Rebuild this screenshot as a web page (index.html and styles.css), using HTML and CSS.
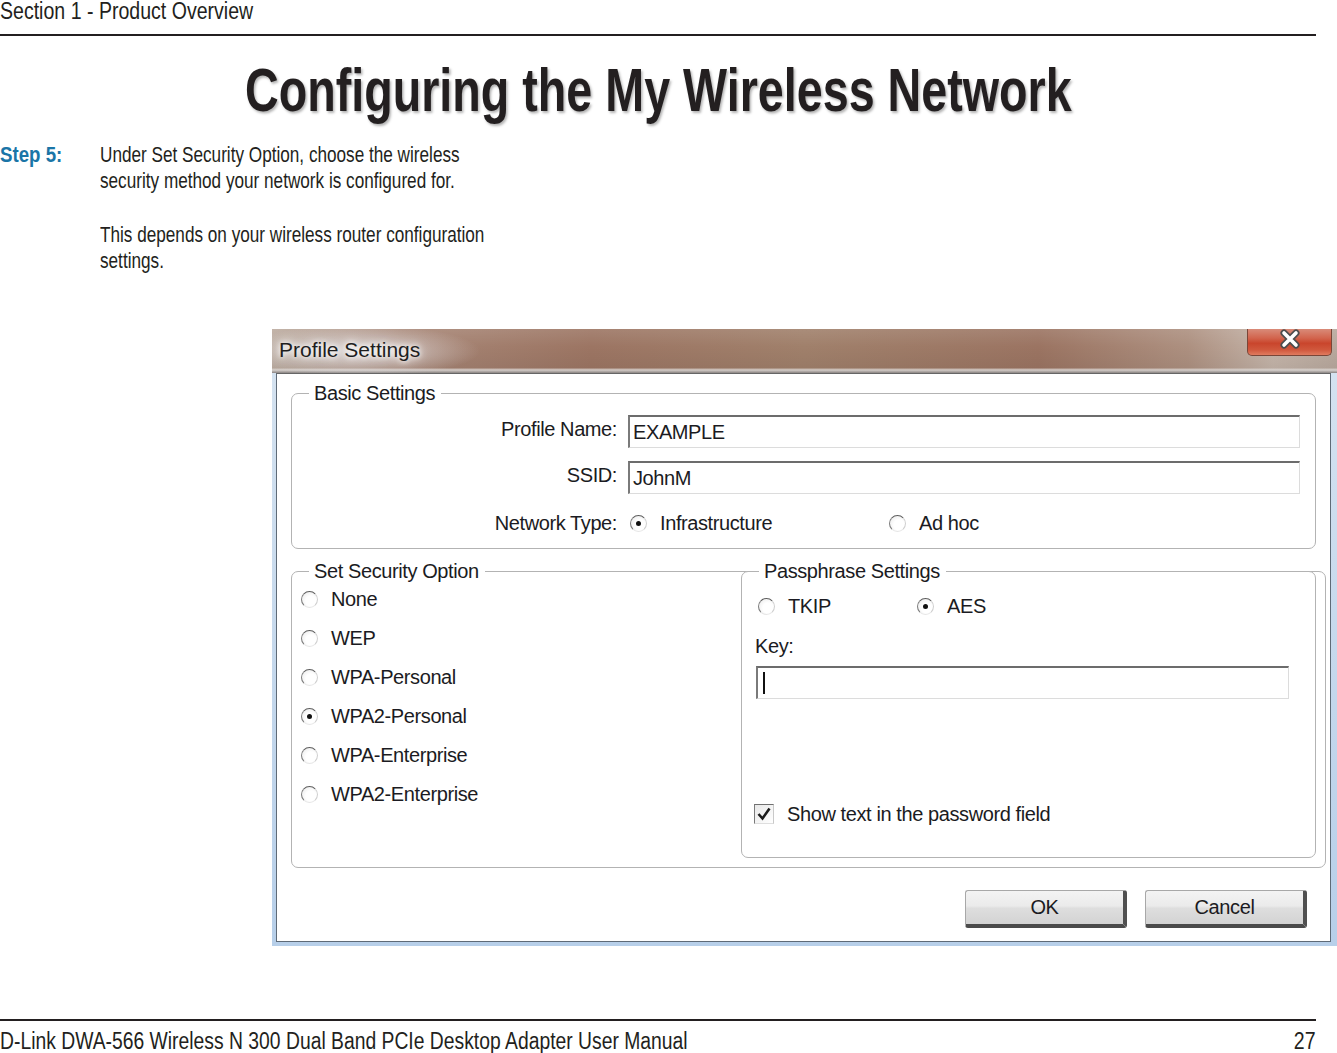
FILE: index.html
```html
<!DOCTYPE html>
<html lang="en">
<head>
    <meta charset="UTF-8">
    <meta name="viewport" content="width=device-width, initial-scale=1.0">
    <title>Configuring the My Wireless Network</title>
    <link rel="stylesheet" href="styles.css">
</head>
<body>
    <div class="page">
        <div class="section-head"><span class="narrow head-text">Section 1 - Product Overview</span></div>
        <h1 class="page-title"><span class="narrow title-text">Configuring the My Wireless Network</span></h1>

        <div class="step">
            <div class="step-label"><span class="narrow label-text">Step 5:</span></div>
            <div class="step-text narrow">
                <p>Under Set Security Option, choose the wireless<br>security method your network is configured for.</p>
                <p>This depends on your wireless router configuration<br>settings.</p>
            </div>
        </div>

        <div class="dialog">
            <div class="titlebar">
                <span class="titlebar-text">Profile Settings</span>
                <span class="close-btn">
                    <svg width="26" height="20" viewBox="0 0 26 20">
                        <path d="M7 4 L19 16 M19 4 L7 16" stroke="#4d4d4d" stroke-width="7" stroke-linecap="round" fill="none"/>
                        <path d="M7 4 L19 16 M19 4 L7 16" stroke="#ffffff" stroke-width="3.6" stroke-linecap="round" fill="none"/>
                    </svg>
                </span>
            </div>
            <div class="frame">
                <div class="client">
                    <div class="group basic">
                        <div class="group-title">Basic Settings</div>
                        <div class="basic-grid">
                            <label>Profile Name:</label>
                            <div class="textbox">EXAMPLE</div>
                            <label>SSID:</label>
                            <div class="textbox">JohnM</div>
                            <label class="net-label">Network Type:</label>
                            <div class="net-type">
                                <span class="option infra"><span class="radio on"></span>Infrastructure</span>
                                <span class="option"><span class="radio"></span>Ad hoc</span>
                            </div>
                        </div>
                    </div>

                    <div class="group security">
                        <div class="group-title">Set Security Option</div>
                        <div class="options">
                            <div class="option row"><span class="radio"></span>None</div>
                            <div class="option row"><span class="radio"></span>WEP</div>
                            <div class="option row"><span class="radio"></span>WPA-Personal</div>
                            <div class="option row"><span class="radio on"></span>WPA2-Personal</div>
                            <div class="option row"><span class="radio"></span>WPA-Enterprise</div>
                            <div class="option row"><span class="radio"></span>WPA2-Enterprise</div>
                        </div>

                        <div class="group passphrase">
                            <div class="group-title">Passphrase Settings</div>
                            <div class="cipher">
                                <span class="option tkip"><span class="radio"></span>TKIP</span>
                                <span class="option"><span class="radio on"></span>AES</span>
                            </div>
                            <div class="key-label">Key:</div>
                            <div class="textbox key"><span class="caret"></span></div>
                            <div class="show-text">
                                <span class="checkbox">
                                    <svg width="16" height="16" viewBox="0 0 16 16">
                                        <path d="M2.5 8 L6.5 12.5 L13.5 2.5" stroke="#1c1c1c" stroke-width="2.6" fill="none"/>
                                    </svg>
                                </span>
                                Show text in the password field
                            </div>
                        </div>
                    </div>

                    <div class="buttons">
                        <button class="btn">OK</button>
                        <button class="btn">Cancel</button>
                    </div>
                </div>
            </div>
        </div>

        <div class="footer">
            <span class="narrow foot-text">D-Link DWA-566 Wireless N 300 Dual Band PCIe Desktop Adapter User Manual</span>
            <span class="narrow page-num">27</span>
        </div>
    </div>
</body>
</html>
```

FILE: styles.css
```css
body {
    margin: 0;
    background: #fff;
    color: #231f20;
    font-family: "Liberation Sans", Arial, sans-serif;
    overflow: hidden;
}

.page {
    width: 1316px;
}

/* the manual uses a condensed face, so the sans is squeezed */
.narrow {
    display: inline-block;
    transform-origin: left center;
}

.section-head {
    height: 34px;
    font-size: 23px;
    line-height: 22px;
    border-bottom: 2px solid #231f20;
}

.head-text {
    transform: scaleX(0.85);
}

.page-title {
    margin: 24px 0 0;
    font-size: 61px;
    line-height: 61px;
    font-weight: bold;
    text-align: center;
    color: #231f20;
    text-shadow: 2px 2px 3px rgba(0, 0, 0, 0.3);
}

.title-text {
    transform: scaleX(0.765);
    transform-origin: center;
}

.step {
    display: flex;
    margin-top: 21px;
    font-size: 22px;
    line-height: 26px;
}

.step-label {
    width: 100px;
    flex: none;
    font-weight: bold;
    color: #1a75a7;
}

.label-text {
    transform: scaleX(0.85);
}

.step-text {
    transform: scaleX(0.78);
}

.step-text p {
    margin: 0 0 28px;
}

.step-text p:last-child {
    margin-bottom: 0;
}

/* dialog window */

.dialog {
    width: 1065px;
    margin: 55px 0 0 272px;
    color: #1b1b22;
}

.titlebar {
    height: 44px;
    display: flex;
    justify-content: space-between;
    align-items: flex-start;
    background:
        radial-gradient(ellipse 120px 26px at 88px 22px, rgba(232, 232, 236, 0.8), rgba(232, 232, 236, 0)),
        linear-gradient(to bottom, rgba(255, 255, 255, 0.1), rgba(0, 0, 0, 0) 40%, rgba(0, 0, 0, 0.05) 88%, rgba(220, 215, 212, 0.9) 93%, #8a8482),
        linear-gradient(to right, #bcaca0 0%, #a78676 12%, #9c7563 30%, #a0806b 50%, #9b7462 72%, #ad9080 86%, #c4b4a9 94%, #b8a89d 100%);
}

.titlebar-text {
    margin: 8px 0 0 7px;
    font-size: 21px;
    line-height: 26px;
    color: #1e1e1e;
    text-shadow: 0 0 5px #fff, 0 0 9px #fff, 0 0 14px rgba(255, 255, 255, 0.8);
}

.close-btn {
    width: 85px;
    height: 27px;
    margin-right: 5px;
    box-sizing: border-box;
    display: flex;
    justify-content: center;
    align-items: flex-start;
    border: 1px solid #7a4638;
    border-top: none;
    border-radius: 0 0 5px 5px;
    background: linear-gradient(to bottom, #d98b79 0%, #d2644d 35%, #c9452c 55%, #d0583d 80%, #e07b5f 100%);
}

.frame {
    padding: 0 6px 4px 4px;
    background: linear-gradient(to bottom, #d4e2f0, #b7cfe9);
}

.client {
    background: #fff;
    border: 1px solid #5e6a77;
    border-top-color: #666;
    padding-bottom: 13px;
    font-size: 20px;
    letter-spacing: -0.4px;
}

.group {
    border: 1px solid #b3b3b3;
    border-radius: 7px;
    background: #fff;
}

.group-title {
    width: fit-content;
    margin: -12px 0 0 17px;
    padding: 0 6px 0 5px;
    background: #fff;
    line-height: 22px;
}

.basic {
    margin: 19px 14px 0;
    padding: 0 15px 11px 0;
}

.basic-grid {
    display: grid;
    grid-template-columns: 325px 1fr;
    column-gap: 11px;
    row-gap: 13px;
    margin-top: 11px;
}

.basic-grid label {
    text-align: right;
    line-height: 28px;
}

.net-label,
.net-type {
    margin-top: 2px;
}

.textbox {
    height: 33px;
    box-sizing: border-box;
    border-top: 2px solid #6c6c6c;
    border-left: 2px solid #7a7a7a;
    border-right: 1px solid #dcdcdc;
    border-bottom: 1px solid #dcdcdc;
    padding-left: 3px;
    line-height: 30px;
    background: #fff;
}

.net-type {
    display: flex;
    align-items: center;
    height: 28px;
    padding-left: 2px;
}

.option {
    display: flex;
    align-items: center;
}

.option.infra {
    width: 259px;
}

.radio {
    width: 15px;
    height: 15px;
    margin-right: 13px;
    flex: none;
    display: inline-flex;
    justify-content: center;
    align-items: center;
    border-radius: 50%;
    border: 1px solid;
    border-color: #5e5e5e #cfcfcf #e6e6e6 #7c7c7c;
    background: radial-gradient(circle at 60% 60%, #ffffff 40%, #e6e6e6);
}

.radio.on::after {
    content: "";
    width: 5px;
    height: 5px;
    border-radius: 50%;
    background: #111;
}

/* security options */

.security {
    display: grid;
    grid-template-columns: 449px 1fr;
    grid-template-rows: auto 1fr;
    margin: 22px 4px 0 14px;
    padding: 0 9px 9px 0;
}

.security > .group-title {
    grid-column: 1;
    grid-row: 1;
}

.options {
    grid-column: 1;
    grid-row: 2;
    margin-top: -2px;
    padding-left: 9px;
}

.option.row {
    height: 39px;
}

.passphrase {
    grid-column: 2;
    grid-row: 1 / span 2;
    margin-top: -1px;
    padding: 0 26px 31px 13px;
}

.passphrase .group-title {
    margin-left: 4px;
}

.cipher {
    display: flex;
    height: 24px;
    margin: 12px 0 0 3px;
}

.option.tkip {
    width: 159px;
}

.key-label {
    margin-top: 17px;
    line-height: 22px;
}

.textbox.key {
    margin: 9px 0 0 1px;
    display: flex;
    align-items: center;
}

.caret {
    width: 2px;
    height: 22px;
    margin-left: 2px;
    background: #111;
}

.show-text {
    display: flex;
    align-items: center;
    height: 24px;
    margin: 103px 0 0 -1px;
}

.checkbox {
    width: 18px;
    height: 18px;
    margin-right: 13px;
    display: flex;
    justify-content: center;
    align-items: center;
    border: 1px solid;
    border-color: #707070 #c9c9c9 #dedede #7a7a7a;
    background: linear-gradient(135deg, #e8e8e8, #fff);
}

.buttons {
    display: flex;
    justify-content: flex-end;
    gap: 18px;
    margin: 22px 23px 0 0;
}

.btn {
    width: 162px;
    height: 38px;
    box-sizing: border-box;
    border: 1px solid #a8a8a8;
    border-right: 4px solid #505050;
    border-bottom: 4px solid #4a4a4a;
    border-radius: 3px;
    background: linear-gradient(to bottom, #f3f3f3 0%, #ebebeb 45%, #dedede 52%, #d3d3d3 100%);
    font-family: "Liberation Sans", Arial, sans-serif;
    font-size: 20px;
    letter-spacing: -0.4px;
    color: #1b1b22;
    padding: 0;
}

.footer {
    display: flex;
    justify-content: space-between;
    margin-top: 73px;
    padding-top: 7px;
    border-top: 2px solid #231f20;
    font-size: 23px;
    line-height: 26px;
}

.foot-text {
    transform: scaleX(0.84);
}

.page-num {
    transform: scaleX(0.85);
    transform-origin: right center;
}
```
